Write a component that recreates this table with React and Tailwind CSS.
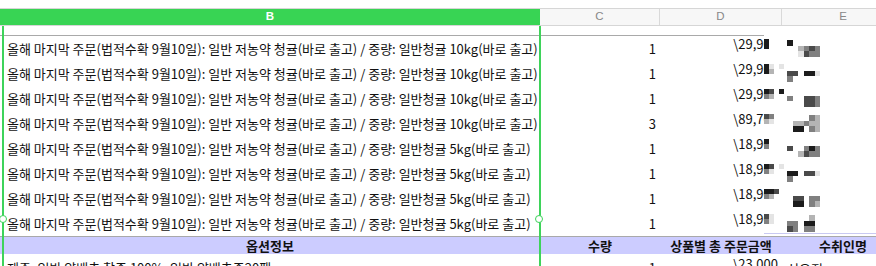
const rows = [
  { w: '10kg', q: 1, p: '\\29,900' },
  { w: '10kg', q: 1, p: '\\29,900' },
  { w: '10kg', q: 1, p: '\\29,900' },
  { w: '10kg', q: 3, p: '\\89,700' },
  { w: '5kg', q: 1, p: '\\18,900' },
  { w: '5kg', q: 1, p: '\\18,900' },
  { w: '5kg', q: 1, p: '\\18,900' },
  { w: '5kg', q: 1, p: '\\18,900' },
];

// pixelated redaction blocks, one pattern per row
const shades = { a: '#1c1c1c', b: '#4a4a4a', c: '#808080', d: '#b4b4b4', e: '#e4e4e4' };
const mosaics = [
  { d: ['a...', 'a...'], e: ['a.....', '..dcbc', '..ebcc'] },
  { d: ['ae.e', 'ad..'], e: ['......', 'bb.aae', 'c.....'] },
  { d: ['ab.a', 'cd..'], e: ['......', 'c..bbc', '...bbc'] },
  { d: ['bc..', 'de..'], e: ['....cd', '.ddcdd', '.aa.cd'] },
  { d: ['a...', 'c...'], e: ['......', 'b..cac', '..dbcc'] },
  { d: ['ab.e', 'ce..'], e: ['......', 'aa.bbe', 'c.....'] },
  { d: ['aab.', 'cd..'], e: ['......', '.bb.cc', '.aa.cd'] },
  { d: ['be..', 'ce..'], e: ['....d.', 'cc.aa.', 'bc.cc.'] },
];

const Mosaic = ({ pattern, cell }) => (
  <div className="flex flex-col">
    {pattern.map((line, i) => (
      <div key={i} className="flex">
        {line.split('').map((ch, j) => (
          <div key={j} style={{ width: cell, height: cell, background: shades[ch] || 'transparent' }} />
        ))}
      </div>
    ))}
  </div>
);

const Handle = ({ className }) => (
  <div className={`absolute w-[8px] h-[8px] rounded-full bg-white border-[1.5px] border-[#3ed35a] ${className}`} />
);

export default function App() {
  return (
    <div className="relative w-[876px] h-[266px] overflow-hidden bg-white text-[#111] font-['Noto_Sans_CJK_KR',sans-serif]">
      <div className="h-[8px]" />

      {/* column letters */}
      <div className="flex h-[18px] border-y border-[#d6d6d6] text-[11.5px] font-['Liberation_Sans',sans-serif]">
        <div className="w-[540px] shrink-0 bg-[#38d454] text-white font-bold flex items-center justify-center">B</div>
        <div className="w-[120px] shrink-0 bg-[#f7f7f7] text-[#888] border-r border-[#d9d9d9] flex items-center justify-center">C</div>
        <div className="w-[122px] shrink-0 bg-[#f7f7f7] text-[#888] border-r border-[#d9d9d9] flex items-center justify-center">D</div>
        <div className="w-[122px] shrink-0 bg-[#f7f7f7] text-[#888] flex items-center justify-center">E</div>
      </div>

      <div className="h-[10px] border-b border-[#a9a9a9]" />

      {rows.map((r, i) => (
        <div key={i} className="flex h-[25px] text-[13px] whitespace-nowrap">
          <div className="w-[540px] shrink-0 pl-[7px] flex items-center overflow-hidden">
            올해 마지막 주문(법적수확 9월10일): 일반 저농약 청귤(바로 출고) / 중량: 일반청귤 {r.w}(바로 출고)
          </div>
          <div className="w-[120px] shrink-0 pr-[4px] flex items-center justify-end">{r.q}</div>
          <div className="w-[122px] shrink-0 pr-[4px] pt-[1px] flex items-start justify-end leading-[14px]">{r.p}</div>
          <div className="w-[122px] shrink-0" />
        </div>
      ))}

      {/* header of the next block */}
      <div className="flex h-[18px] border-t border-[#a9a9a9] bg-[#ccccff] text-[13px] font-bold whitespace-nowrap">
        <div className="w-[540px] shrink-0 flex items-center justify-center">옵션정보</div>
        <div className="w-[120px] shrink-0 flex items-center justify-center">수량</div>
        <div className="w-[122px] shrink-0 flex items-center justify-center">상품별 총 주문금액</div>
        <div className="w-[122px] shrink-0 flex items-center justify-center">수취인명</div>
      </div>

      <div className="flex h-[25px] text-[13px] whitespace-nowrap">
        <div className="w-[540px] shrink-0 pl-[7px] pt-[3px] flex items-center overflow-hidden">
          제주, 일반 양배추 찰중 100%: 일반 양배추중20팩
        </div>
        <div className="w-[120px] shrink-0 pr-[4px] pt-[3px] flex items-center justify-end">1</div>
        <div className="w-[122px] shrink-0 pr-[4px] pt-[3px] flex items-start justify-end leading-[14px]">\23,000</div>
        <div className="w-[122px] shrink-0 pl-[5px] pt-[5px] flex items-center">신유진</div>
      </div>

      {/* redaction overlay over columns D/E */}
      <div className="absolute left-[764px] top-[28px] w-[112px] h-[206px] bg-white border-b border-[#c9c9f2] pt-[8px]">
        {mosaics.map((m, i) => (
          <div key={i} className="flex h-[25px] items-start">
            <div className="pt-[3px]">
              <Mosaic pattern={m.d} cell={5} />
            </div>
            <div className="ml-[3px] pt-[4px]">
              <Mosaic pattern={m.e} cell={5.5} />
            </div>
          </div>
        ))}
      </div>

      {/* selection outline */}
      <div className="absolute left-[2px] top-[26px] w-[1.5px] h-[240px] bg-[#3ed35a]" />
      <div className="absolute left-[539px] top-[26px] w-[1.5px] h-[240px] bg-[#3ed35a]" />
      <Handle className="left-[-1px] top-[215px]" />
      <Handle className="left-[535px] top-[215px]" />
    </div>
  );
}
